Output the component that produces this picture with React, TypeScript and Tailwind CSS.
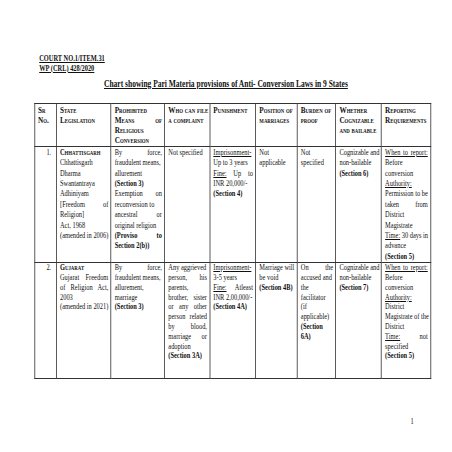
import type { ReactNode } from "react"
import clsx from "clsx"

// one printed line; j = spread to both edges like the justified PDF text
function L({ children, j, b }: { children: ReactNode; j?: boolean; b?: boolean }) {
  return (
    <div className={clsx(j ? "text-justify [text-align-last:justify]" : "whitespace-nowrap", b && "font-bold")}>
      {children}
    </div>
  )
}

function U({ children }: { children: ReactNode }) {
  return <span className="underline underline-offset-1">{children}</span>
}

function Cell({ children, right }: { children?: ReactNode; right?: boolean }) {
  return (
    <td className={clsx("border border-[#333] align-top pl-[4px] pr-[3px]", right && "text-right pr-[6px]")}>
      {children}
    </td>
  )
}

function Head({ children }: { children: ReactNode }) {
  return (
    <th className="border border-[#333] align-top pl-[4px] pr-[3px] pt-[1px] text-left font-bold text-[9px] leading-[10.3px] [font-variant-caps:small-caps]">
      {children}
    </th>
  )
}

function SmallCaps({ children }: { children: ReactNode }) {
  return <div className="whitespace-nowrap font-bold [font-variant-caps:small-caps]">{children}</div>
}

export default function App() {
  return (
    <div className="w-[452px] h-[452px] overflow-hidden bg-white text-[#111] font-['Liberation_Serif','Times_New_Roman',serif]">
      <div className="w-[565px] origin-top-left scale-x-[0.8] pt-[54px]">
        {/* case reference */}
        <div className="pl-[49px] text-[8px] leading-[9.5px] font-bold">
          <div><U>COURT NO.1/ITEM.31</U></div>
          <div><U>WP (CRL) 428/2020</U></div>
        </div>

        <div className="mt-[5px] pl-[130px] text-[9.4px] leading-[12px] font-bold">
          <U>Chart showing Pari Materia provisions of Anti- Conversion Laws in 9 States</U>
        </div>

        <div className="mt-[12.5px] pl-[42.5px]">
          <table className="table-fixed border-collapse w-[495px] text-[8px]">
            <colgroup>
              <col className="w-[27.5px]" />
              <col className="w-[68.4px]" />
              <col className="w-[67px]" />
              <col className="w-[56.3px]" />
              <col className="w-[57.5px]" />
              <col className="w-[51.8px]" />
              <col className="w-[48.3px]" />
              <col className="w-[57.1px]" />
              <col className="w-[61.3px]" />
            </colgroup>
            <thead>
              <tr className="h-[43px]">
                <Head><L>Sr</L><L>No.</L></Head>
                <Head><L>State</L><L>Legislation</L></Head>
                <Head><L>Prohibited</L><L j>Means of</L><L>Religious</L><L>Conversion</L></Head>
                <Head><L>Who can file</L><L>a complaint</L></Head>
                <Head><L>Punishment</L></Head>
                <Head><L>Position of</L><L>marriages</L></Head>
                <Head><L>Burden of</L><L>proof</L></Head>
                <Head><L>Whether</L><L>Cognizable</L><L>and bailable</L></Head>
                <Head><L>Reporting</L><L>Requirements</L></Head>
              </tr>
            </thead>
            <tbody>
              <tr className="h-[115.5px] leading-[10.4px] [&>td]:pt-[1px]">
                <Cell right>1.</Cell>
                <Cell>
                  <SmallCaps>Chhattisgarh</SmallCaps>
                  <L>Chhattisgarh</L>
                  <L>Dharma</L>
                  <L>Swantantraya</L>
                  <L>Adhiniyam</L>
                  <L j>[Freedom of</L>
                  <L>Religion]</L>
                  <L>Act, 1968</L>
                  <L>(amended in 2006)</L>
                </Cell>
                <Cell>
                  <L j>By force,</L>
                  <L>fraudulent means,</L>
                  <L>allurement</L>
                  <L b>(Section 3)</L>
                  <L j>Exemption on</L>
                  <L>reconversion to</L>
                  <L j>ancestral or</L>
                  <L>original religion</L>
                  <L j b>(Proviso to</L>
                  <L b>Section 2(b))</L>
                </Cell>
                <Cell>
                  <L>Not specified</L>
                </Cell>
                <Cell>
                  <L><U>Imprisonment-</U></L>
                  <L>Up to 3 years</L>
                  <L j><U>Fine:</U> Up to</L>
                  <L>INR 20,000/-</L>
                  <L b>(Section 4)</L>
                </Cell>
                <Cell>
                  <L>Not</L>
                  <L>applicable</L>
                </Cell>
                <Cell>
                  <L>Not</L>
                  <L>specified</L>
                </Cell>
                <Cell>
                  <L>Cognizable and</L>
                  <L>non-bailable</L>
                  <L b>(Section 6)</L>
                </Cell>
                <Cell>
                  <L j><U>When to report:</U></L>
                  <L>Before</L>
                  <L>conversion</L>
                  <L><U>Authority:</U></L>
                  <L>Permission to be</L>
                  <L j>taken from</L>
                  <L>District</L>
                  <L>Magistrate</L>
                  <L><U>Time:</U> 30 days in</L>
                  <L>advance</L>
                  <L b>(Section 5)</L>
                </Cell>
              </tr>
              <tr className="h-[115.5px] leading-[9.8px]">
                <Cell right>2.</Cell>
                <Cell>
                  <SmallCaps>Gujarat</SmallCaps>
                  <L j>Gujarat Freedom</L>
                  <L j>of Religion Act,</L>
                  <L>2003</L>
                  <L>(amended in 2021)</L>
                </Cell>
                <Cell>
                  <L j>By force,</L>
                  <L>fraudulent means,</L>
                  <L>allurement,</L>
                  <L>marriage</L>
                  <L b>(Section 3)</L>
                </Cell>
                <Cell>
                  <L>Any aggrieved</L>
                  <L j>person, his</L>
                  <L>parents,</L>
                  <L j>brother, sister</L>
                  <L j>or any other</L>
                  <L j>person related</L>
                  <L j>by blood,</L>
                  <L j>marriage or</L>
                  <L>adoption</L>
                  <L b>(Section 3A)</L>
                </Cell>
                <Cell>
                  <L><U>Imprisonment-</U></L>
                  <L>3-5 years</L>
                  <L j><U>Fine:</U> Atleast</L>
                  <L>INR 2,00,000/-</L>
                  <L b>(Section 4A)</L>
                </Cell>
                <Cell>
                  <L>Marriage will</L>
                  <L>be void</L>
                  <L b>(Section 4B)</L>
                </Cell>
                <Cell>
                  <L j>On the</L>
                  <L>accused and</L>
                  <L>the</L>
                  <L>facilitator</L>
                  <L>(if</L>
                  <L>applicable)</L>
                  <L b>(Section</L>
                  <L b>6A)</L>
                </Cell>
                <Cell>
                  <L>Cognizable and</L>
                  <L>non-bailable</L>
                  <L b>(Section 7)</L>
                </Cell>
                <Cell>
                  <L j><U>When to report:</U></L>
                  <L>Before</L>
                  <L>conversion</L>
                  <L><U>Authority:</U></L>
                  <L>District</L>
                  <L>Magistrate of the</L>
                  <L>District</L>
                  <L j><U>Time:</U> not</L>
                  <L>specified</L>
                  <L b>(Section 5)</L>
                </Cell>
              </tr>
            </tbody>
          </table>
        </div>

        {/* page number */}
        <div className="mt-[38px] pl-[513px] text-[8px] leading-[10px]">1</div>
      </div>
    </div>
  )
}
